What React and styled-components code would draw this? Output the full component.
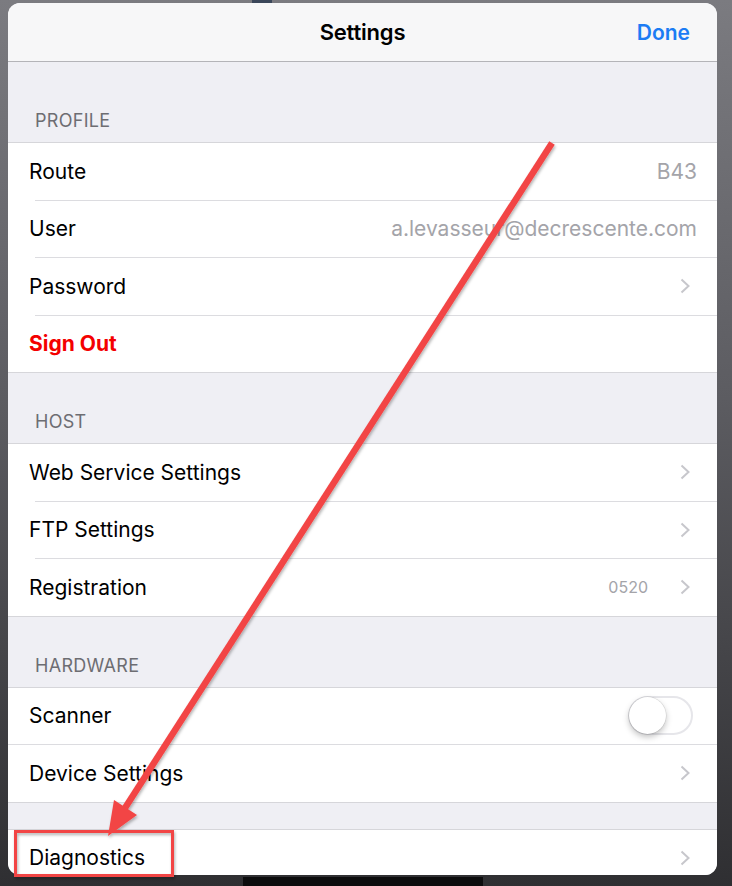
import React from "react";
import styled, { createGlobalStyle } from "styled-components";

const GlobalStyle = createGlobalStyle`
  html, body {
    margin: 0;
    padding: 0;
  }
  body {
    background: #2c2c2e;
    font-family: Inter, "Liberation Sans", sans-serif;
  }
`;

const Page = styled.div`
  position: relative;
  width: 732px;
  height: 886px;
  overflow: hidden;
  display: flex;
  flex-direction: column;
  padding: 0 15px 0 8px;
  box-sizing: border-box;
  background: linear-gradient(180deg, #7b7b80 0%, #5c5c61 45%, #2f2f32 100%);
`;

const TopStrip = styled.div`
  height: 3px;
  display: flex;
  padding-left: 244px;
`;

const TopMarker = styled.div`
  width: 20px;
  height: 3px;
  background: #3b475a;
`;

const Panel = styled.div`
  width: 709px;
  height: 872px;
  flex-shrink: 0;
  border-radius: 12px;
  overflow: hidden;
  background: #efeff4;
`;

const NavBar = styled.div`
  height: 58px;
  background: #f7f7f8;
  border-bottom: 1px solid #b4b4b8;
  display: grid;
  grid-template-columns: 1fr auto 1fr;
  align-items: center;
`;

const Title = styled.div`
  grid-column: 2;
  font-size: 22px;
  font-weight: 600;
  color: #000;
  letter-spacing: -0.2px;
`;

const DoneButton = styled.div`
  justify-self: end;
  padding-right: 27px;
  font-size: 21px;
  font-weight: 600;
  color: #1c7cf4;
`;

const SectionHeader = styled.div`
  height: ${(p) => p.$height}px;
  box-sizing: border-box;
  display: flex;
  align-items: flex-end;
  padding: 0 27px 11px;
  font-size: 18px;
  line-height: 20px;
  color: #6d6d72;
  letter-spacing: 0.3px;
`;

const Group = styled.div`
  background: #fff;
  border-top: 1px solid #d6d6da;
  border-bottom: 1px solid #d6d6da;
`;

const Row = styled.div`
  height: 56.5px;
  display: flex;
  align-items: center;
  padding: 0 ${(p) => (p.$toggle ? 24 : 20)}px 0 21px;
  position: relative;
  & + & {
    border-top: 1px solid #dcdce0;
  }
  & + &::before {
    content: "";
    position: absolute;
    left: 0;
    top: -1px;
    width: 27px;
    height: 1px;
    background: #fff;
  }
`;

const Label = styled.div`
  flex: 1;
  font-size: 21px;
  color: ${(p) => (p.$danger ? "#f40000" : "#000")};
  font-weight: ${(p) => (p.$danger ? 700 : 400)};
`;

const Value = styled.div`
  font-size: ${(p) => (p.$small ? 16 : 21)}px;
  color: #a4a4a9;
  margin-right: ${(p) => (p.$small ? 32 : 0)}px;
`;

const ChevronWrap = styled.div`
  width: 10px;
  height: 16px;
  display: flex;
  margin-right: 7px;
`;

const Toggle = styled.div`
  width: 65px;
  height: 39px;
  box-sizing: border-box;
  border: 2px solid #e6e6ea;
  border-radius: 20px;
  background: #fff;
  display: flex;
  align-items: center;
`;

const Knob = styled.div`
  width: 37px;
  height: 37px;
  margin-left: -1px;
  border-radius: 50%;
  background: #fff;
  box-shadow: 0 3px 6px rgba(0, 0, 0, 0.25), 0 0 0 0.5px rgba(0, 0, 0, 0.12);
`;

const Dock = styled.div`
  width: 240px;
  height: 9px;
  margin: 2px 0 0 235px;
  background: #0c0c0d;
`;

const Overlay = styled.svg`
  position: absolute;
  left: 0;
  top: 0;
  pointer-events: none;
`;

const Chevron = () => (
  <ChevronWrap>
    <svg width="10" height="16" viewBox="0 0 10 16">
      <polyline
        points="1.5,1.5 8.5,8 1.5,14.5"
        fill="none"
        stroke="#c7c7cc"
        strokeWidth="2"
      />
    </svg>
  </ChevronWrap>
);

const sections = [
  {
    header: "PROFILE",
    height: 80,
    rows: [
      { label: "Route", value: "B43" },
      { label: "User", value: "a.levasseur@decrescente.com" },
      { label: "Password", chevron: true },
      { label: "Sign Out", danger: true },
    ],
  },
  {
    header: "HOST",
    height: 70,
    rows: [
      { label: "Web Service Settings", chevron: true },
      { label: "FTP Settings", chevron: true },
      { label: "Registration", value: "0520", small: true, chevron: true },
    ],
  },
  {
    header: "HARDWARE",
    height: 70,
    rows: [
      { label: "Scanner", toggle: true },
      { label: "Device Settings", chevron: true },
    ],
  },
  {
    header: "",
    height: 26,
    rows: [{ label: "Diagnostics", chevron: true }],
  },
];

export default function App() {
  return (
    <>
      <GlobalStyle />
      <Page>
        <TopStrip>
          <TopMarker />
        </TopStrip>
        <Panel>
          <NavBar>
            <Title>Settings</Title>
            <DoneButton>Done</DoneButton>
          </NavBar>
          {sections.map((s, i) => (
            <React.Fragment key={i}>
              <SectionHeader $height={s.height}>{s.header}</SectionHeader>
              <Group>
                {s.rows.map((r) => (
                  <Row key={r.label} $toggle={r.toggle}>
                    <Label $danger={r.danger}>{r.label}</Label>
                    {r.value && <Value $small={r.small}>{r.value}</Value>}
                    {r.chevron && <Chevron />}
                    {r.toggle && (
                      <Toggle>
                        <Knob />
                      </Toggle>
                    )}
                  </Row>
                ))}
              </Group>
            </React.Fragment>
          ))}
        </Panel>
        <Dock />
        <Overlay width="732" height="886" viewBox="0 0 732 886">
          <defs>
            <filter id="shadow" x="-20%" y="-20%" width="140%" height="140%">
              <feDropShadow dx="1" dy="2" stdDeviation="1.5" floodColor="#000" floodOpacity="0.3" />
            </filter>
          </defs>
          <g filter="url(#shadow)">
            <line x1="552" y1="143" x2="125" y2="808" stroke="#f24545" strokeWidth="6.5" />
            <polygon points="108,836 137,815 114,800" fill="#f24545" />
            <rect x="15.5" y="831.5" width="157" height="44" fill="none" stroke="#f24545" strokeWidth="3" />
          </g>
        </Overlay>
      </Page>
    </>
  );
}
